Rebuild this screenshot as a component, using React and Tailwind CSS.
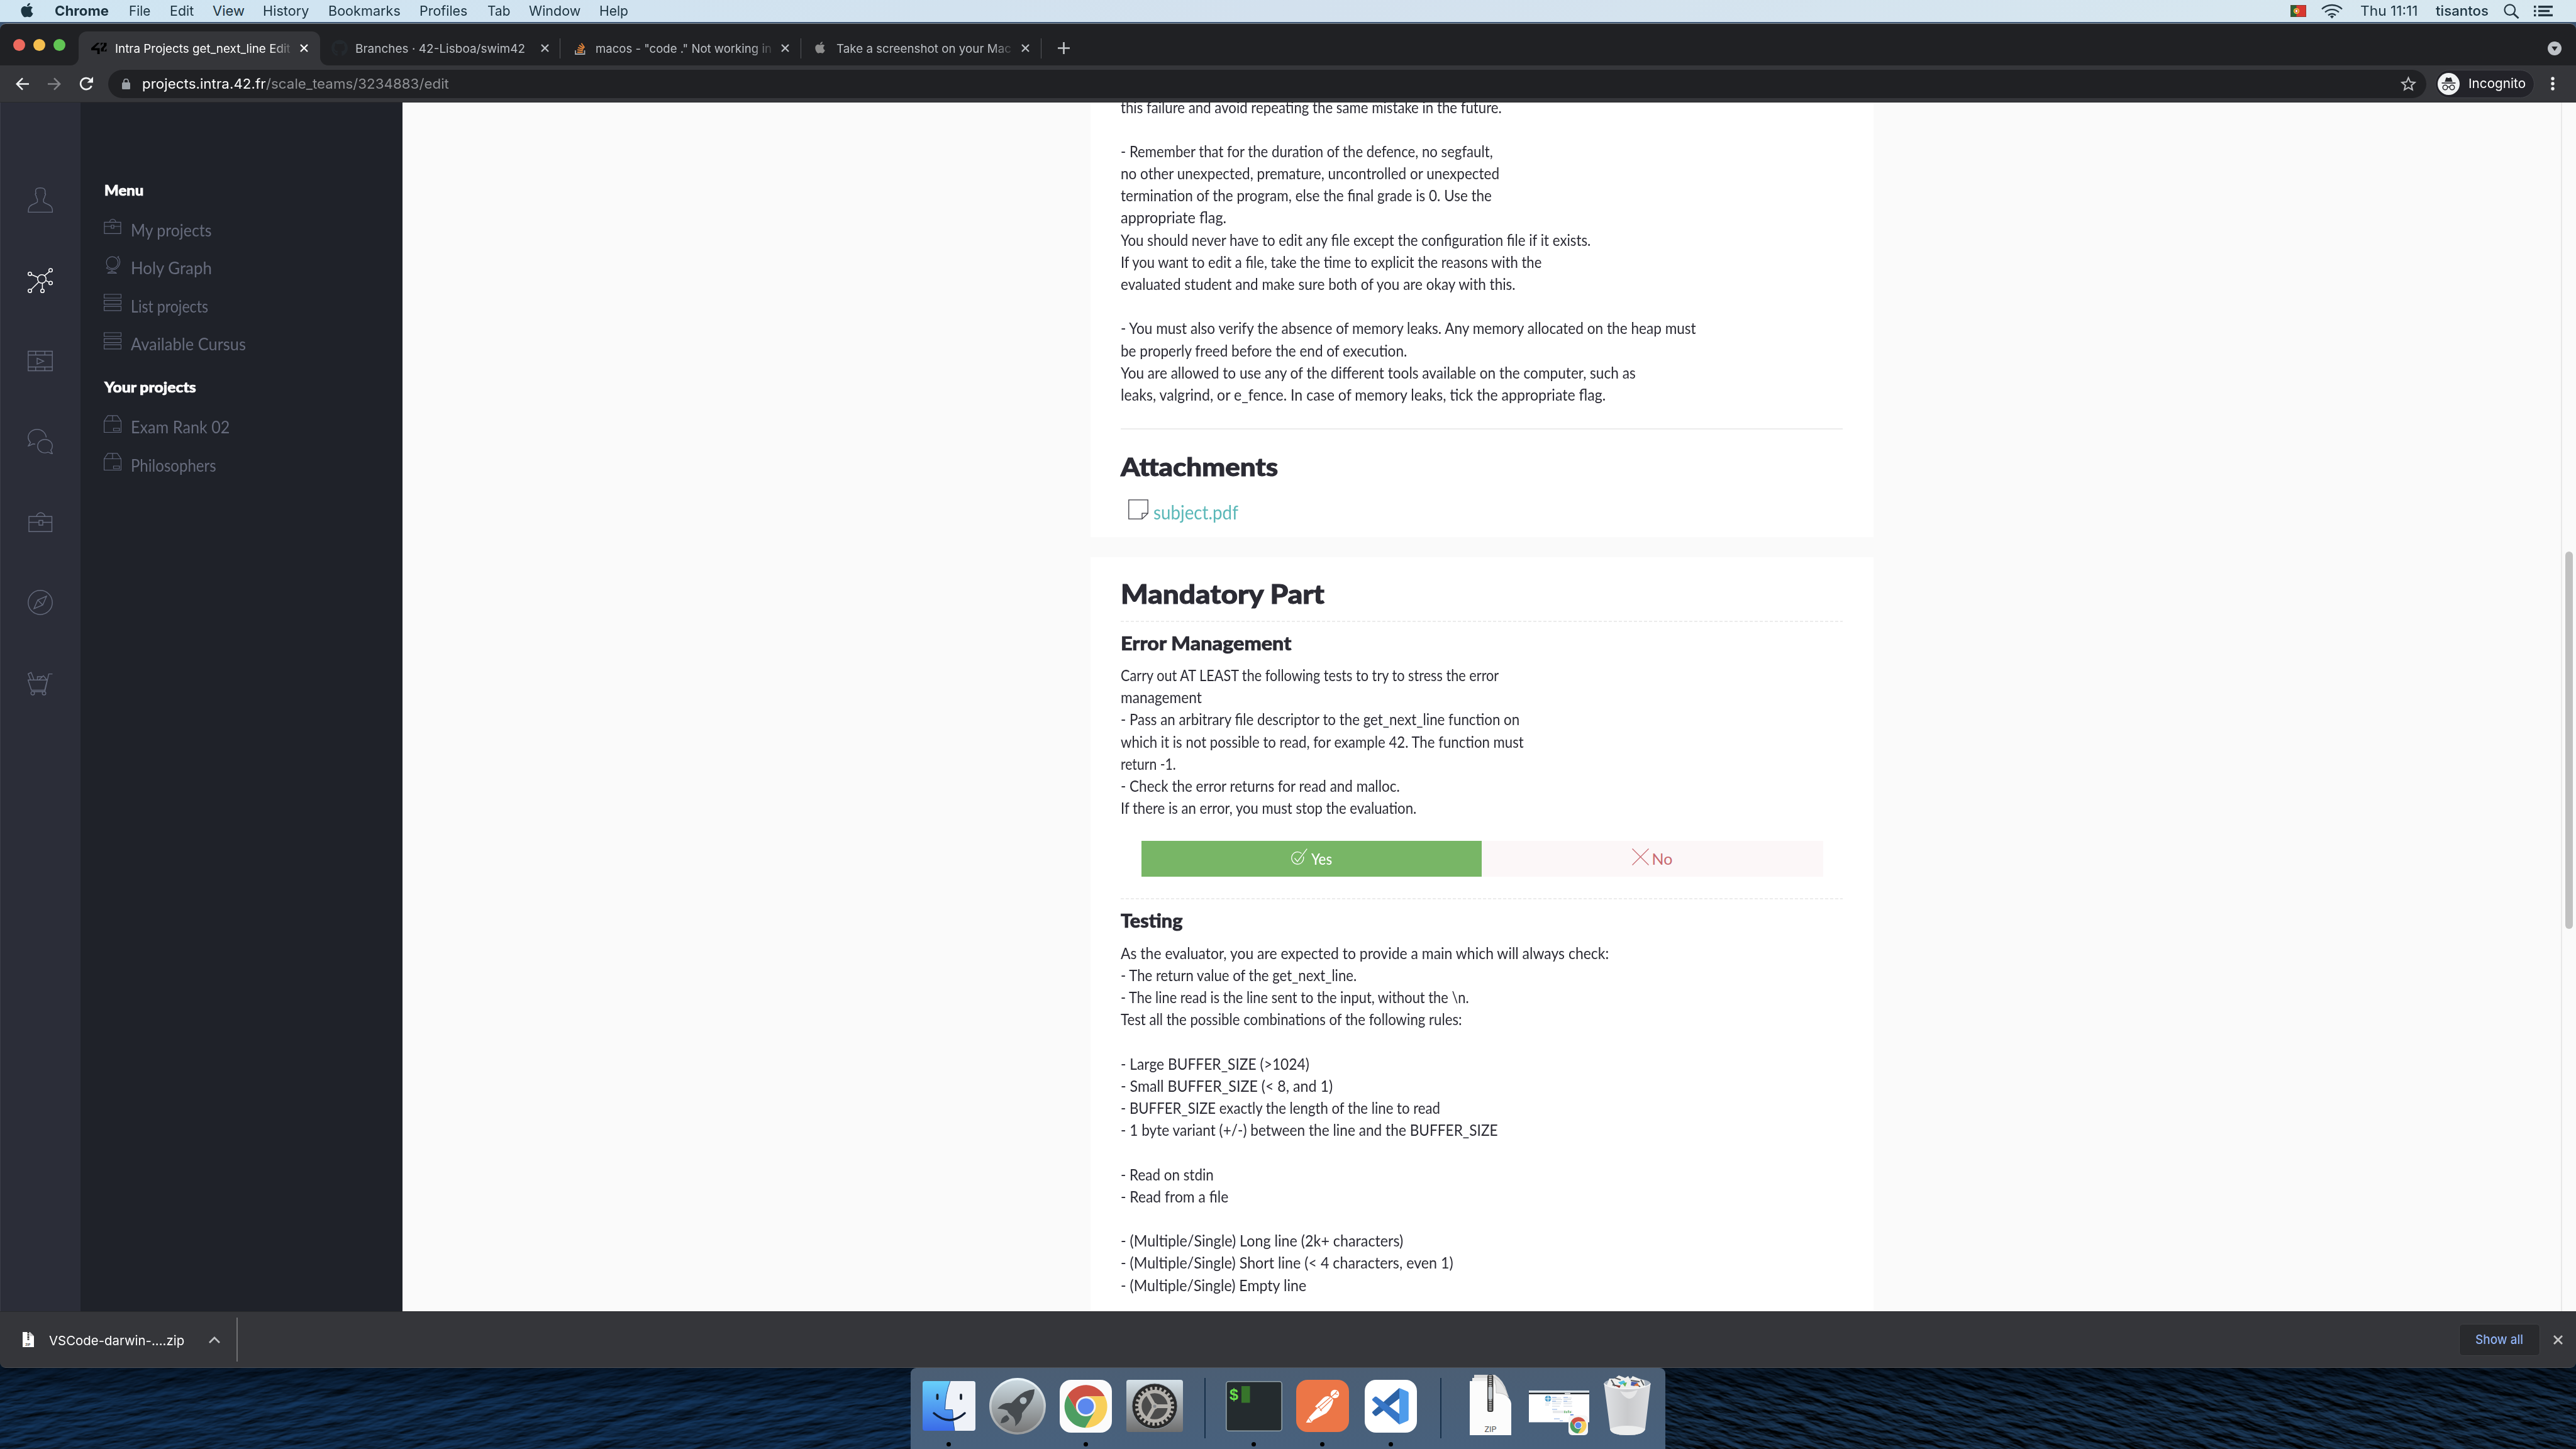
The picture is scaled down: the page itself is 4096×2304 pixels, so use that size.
import React, { useLayoutEffect, useRef, useState } from "react";
import { FaApple, FaGithub } from "react-icons/fa";

/* One line of text, condensed or widened to a set width. */
function Fit({ w, children, className = "" }) {
  const ref = useRef(null);
  const [scale, setScale] = useState(1);
  useLayoutEffect(() => {
    const natural = ref.current.offsetWidth;
    if (natural) setScale(w / natural);
  }, [w, children]);
  return (
    <span className={`inline-block shrink-0 whitespace-pre ${className}`} style={{ width: w }}>
      <span ref={ref} className="inline-block origin-left" style={{ transform: `scaleX(${scale})` }}>
        {children}
      </span>
    </span>
  );
}

/* ---------- menu bar ---------- */

const MENUS = [
  ["File", 34, "mr-[31px]"],
  ["Edit", 38, "mr-[30px]"],
  ["View", 51, "mr-[29px]"],
  ["History", 73, "mr-[31px]"],
  ["Bookmarks", 115, "mr-[30px]"],
  ["Profiles", 76, "mr-[32px]"],
  ["Tab", 36, "mr-[30px]"],
  ["Window", 82, "mr-[30px]"],
  ["Help", 46, ""],
];

function MenuBar() {
  return (
    <header className="flex h-[35px] shrink-0 items-center bg-gradient-to-r from-[#cfe5f2] via-[#d3e1ee] to-[#d7e8f0] text-[22px] leading-[35px] text-[#1c3340]">
      <FaApple className="-mt-1 ml-[32px] h-[26px] w-[22px] text-[#1b3441]" />
      <Fit w={86} className="ml-[33px] mr-[32px] font-bold">Chrome</Fit>
      {MENUS.map(([t, w, m]) => (
        <Fit key={t} w={w} className={m}>{t}</Fit>
      ))}
      <div className="ml-auto flex items-center">
        <svg className="h-[19px] w-[25px]" viewBox="0 0 25 19">
          <rect width="25" height="19" fill="#d8372f" />
          <rect width="9.5" height="19" fill="#2c6136" />
          <circle cx="9.5" cy="9.5" r="4.6" fill="#e3d13b" />
          <circle cx="9.5" cy="9.5" r="2.9" fill="#d8372f" />
          <rect x="8" y="7.7" width="3" height="3.6" fill="#f5f5f5" />
          <rect x=".5" y=".5" width="24" height="18" fill="none" stroke="#5e3a2e" strokeOpacity=".6" />
        </svg>
        <svg className="ml-[24px] h-[24px] w-[34px]" viewBox="0 0 34 24" fill="none" stroke="#243540" strokeWidth="2.3">
          <path d="M1 8.5a23 23 0 0 1 32 0M6 13.5a16 16 0 0 1 22 0M11 18.3a9 9 0 0 1 12 0" />
          <path d="M17 23.5l-3-3.4a4.6 4.6 0 0 1 6 0z" fill="#243540" stroke="none" />
        </svg>
        <Fit w={92} className="ml-[28px]">Thu 11:11</Fit>
        <Fit w={84} className="ml-[28px] font-medium">tisantos</Fit>
        <svg className="ml-[24px] h-[24px] w-[25px]" viewBox="0 0 25 24" fill="none" stroke="#243540" strokeWidth="2.2">
          <circle cx="9.8" cy="9.6" r="8.3" />
          <path d="M15.6 15.6l8 7.4" strokeWidth="2.8" />
        </svg>
        <svg className="ml-[23px] mr-[37px] h-[17px] w-[30px]" viewBox="0 0 30 17" fill="#243540">
          <path d="M0 0h3.4v3.4H0zM0 6.8h3.4v3.4H0zM0 13.6h3.4V17H0zM7 0h23v3.4H7zM7 6.8h18v3.4H7zM7 13.6h23V17H7z" />
        </svg>
      </div>
    </header>
  );
}

/* ---------- tab strip and toolbar ---------- */

function Cross({ className }) {
  return (
    <svg className={`h-[13px] w-[13px] shrink-0 ${className}`} viewBox="0 0 13 13" fill="none" stroke="currentColor" strokeWidth="2.3">
      <path d="M1 1l11 11M12 1L1 12" />
    </svg>
  );
}

function Divider() {
  return <div className="h-[32px] w-px shrink-0 bg-[#55575b]" />;
}

/* A title that fades out at its right end. */
function TabTitle({ children, className }) {
  return <div className={`shrink-0 whitespace-pre [mask-image:linear-gradient(90deg,#000_88%,rgba(0,0,0,.15))] ${className}`}>{children}</div>;
}

function TabStrip() {
  return (
    <div className="flex h-[66px] shrink-0 rounded-t-[9px] bg-[#202124] text-[18.5px] leading-[26px] text-[#bdc1c6]">
      <div className="flex gap-[13px] pl-[20.5px] pt-[23.5px]">
        <i className="h-[19px] w-[19px] rounded-full bg-[#ed6a5e]" />
        <i className="h-[19px] w-[19px] rounded-full bg-[#f5bf4f]" />
        <i className="h-[19px] w-[19px] rounded-full bg-[#61c554]" />
      </div>
      <svg className="ml-[8.5px] mt-[53px] h-[13px] w-[13px]" viewBox="0 0 13 13"><path d="M13 0v13H0A13 13 0 0 0 13 0z" fill="#35363a" /></svg>
      <div className="mt-[11.5px] flex h-[54.5px] w-[384px] items-center rounded-t-[13px] bg-[#35363a] pl-[20px] text-white">
        <svg className="h-[18px] w-[25px] shrink-0" viewBox="0 0 25 18" fill="#000">
          <path d="M9.5 0h4L5 8.6h8.5V18H9.700v-5.900H0V8.600zM15 0h4.500L15 4.600zM24.500 0v4.600L20 9.200v4.600h-4.500V9.200L20 4.600V0zM24.500 9.200v4.600H20z" />
        </svg>
        <TabTitle className="ml-[13px] w-[280px]">
          <Fit w={279}>Intra Projects get_next_line Edit</Fit>
        </TabTitle>
        <Cross className="ml-[14px]" />
      </div>
      <svg className="mt-[53px] h-[13px] w-[13px]" viewBox="0 0 13 13"><path d="M0 0v13h13A13 13 0 0 1 0 0z" fill="#35363a" /></svg>
      <div className="mt-[11.5px] flex h-[54.5px] items-center">
        <FaGithub className="ml-[5px] h-[27px] w-[26px] text-[#24292e]" />
        <Fit w={270} className="ml-[11.500px]">Branches · 42-Lisboa/swim42</Fit>
        <Cross className="ml-[25.500px] mr-[17px]" />
        <Divider />
        <svg className="ml-[23px] h-[20px] w-[17px] shrink-0" viewBox="0 0 17 20" fill="none">
          <path d="M1 13v6h14.500v-6" stroke="#a9adb1" strokeWidth="1.800" />
          <path d="M3.800 16h8.800M4 12.300l8.800 1M5 8.600l8.400 2.600M7 4.900l7.400 4.700M10.400 1.700l5 7" stroke="#e8873a" strokeWidth="1.900" />
        </svg>
        <TabTitle className="ml-[16px] w-[281px]">
          <Fit w={280}>macos - "code ." Not working in</Fit>
        </TabTitle>
        <Cross className="ml-[14px] mr-[18px]" />
        <Divider />
        <FaApple className="-mt-[3px] ml-[21px] h-[21px] w-[18px] text-[#8c8c8c]" />
        <TabTitle className="ml-[17px] w-[280px]">
          <Fit w={278}>Take a screenshot on your Mac</Fit>
        </TabTitle>
        <Cross className="ml-[14px] mr-[18px]" />
        <Divider />
        <svg className="ml-[26px] h-[19px] w-[19px]" viewBox="0 0 19 19" stroke="#c4c7ca" strokeWidth="2.600"><path d="M9.500 0v19M0 9.500h19" /></svg>
      </div>
      <svg className="ml-auto mr-[23px] mt-[28px] h-[22px] w-[22px]" viewBox="0 0 22 22">
        <circle cx="11" cy="11" r="11" fill="#bdc1c6" />
        <path d="M6.200 8h9.600L11 15z" fill="#202124" />
      </svg>
    </div>
  );
}

function Toolbar() {
  return (
    <div className="flex h-[58px] shrink-0 items-center bg-[#35363a] text-[21.5px] leading-[28px] text-white">
      <svg className="ml-[25px] h-[21px] w-[21px]" viewBox="0 0 21 21" fill="none" stroke="#f1f3f4" strokeWidth="2.500"><path d="M21 10.500H2M11 1.300L1.800 10.500 11 19.700" /></svg>
      <svg className="ml-[30px] h-[21px] w-[21px]" viewBox="0 0 21 21" fill="none" stroke="#838488" strokeWidth="2.500"><path d="M0 10.500h19M10 1.300l9.200 9.200L10 19.700" /></svg>
      <svg className="ml-[29px] h-[22px] w-[23px]" viewBox="0 0 23 22" fill="none" stroke="#f1f3f4" strokeWidth="2.700">
        <path d="M19.500 14.500a9 9 0 1 1-2.200-10" />
        <path d="M22 0v9.500h-9.500z" fill="#f1f3f4" stroke="none" />
      </svg>
      <div className="ml-[23px] flex h-[45px] w-[3686px] items-center rounded-full bg-[#202124]">
        <svg className="ml-[22px] h-[17px] w-[13px]" viewBox="0 0 13 17">
          <rect y="6" width="13" height="11" rx="1.500" fill="#9aa0a6" />
          <path d="M3 7V4a3.500 3.500 0 0 1 7 0v3" fill="none" stroke="#9aa0a6" strokeWidth="1.800" />
        </svg>
        <Fit w={197} className="ml-[19px]">projects.intra.42.fr</Fit>
        <Fit w={291} className="text-[#8f9195]">/scale_teams/3234883/edit</Fit>
        <svg className="ml-auto mr-[16px] h-[24px] w-[25px]" viewBox="0 0 25 24" fill="none" stroke="#c1c3c6" strokeWidth="2">
          <path d="M12.500 2.600l2.900 6.700 7.400.700-5.600 4.800 1.700 7-6.400-3.700-6.400 3.700 1.700-7L2.200 10l7.400-.700z" />
        </svg>
      </div>
      <div className="ml-[14px] flex h-[45px] w-[158px] items-center rounded-full border border-[#424349] bg-[#232329] text-[20.500px]">
        <svg className="ml-[3px] h-[35px] w-[35px]" viewBox="0 0 35 35">
          <circle cx="17.500" cy="17.500" r="17.500" fill="#f1f3f4" />
          <path d="M13.500 7.500c1.500-1 2.500.4 4 .4s2.500-1.400 4-.4l2.200 6.500H11.300z" fill="#27282c" />
          <path d="M6.500 16h22" stroke="#27282c" strokeWidth="1.700" />
          <g fill="none" stroke="#27282c" strokeWidth="1.500"><circle cx="12" cy="23" r="3.700" /><circle cx="23" cy="23" r="3.700" /><path d="M15.700 22.500q1.800-1 3.600 0" /></g>
        </svg>
        <Fit w={91} className="ml-[13.500px]">Incognito</Fit>
      </div>
      <svg className="ml-[26px] h-[22px] w-[6px]" viewBox="0 0 6 22" fill="#f1f3f4"><circle cx="3" cy="3" r="2.700" /><circle cx="3" cy="11" r="2.700" /><circle cx="3" cy="19" r="2.700" /></svg>
    </div>
  );
}

/* ---------- page sidebars ---------- */

const RAIL = [
  <path key="a" d="M1 39.500c0-8 2-10 6-12 4-1.700 8-3 8.500-4.500V19c-1-1.500-2-3.500-2.300-6-1.300-1-1.500-3 0-3.500C11 2 15 .800 20 .800S29 2 27.500 9.500c1.500.500 1 2.500 0 3.500-.300 2.500-1.300 4.500-2.300 6v4c.500 1.500 4.500 2.800 8.300 4.500 4 2 6 4 6 12z" />,
  <g key="b" strokeWidth="1.500">
    <circle cx="22.500" cy="17.500" r="6.700" /><circle cx="3.500" cy="9.500" r="2.800" /><circle cx="36.500" cy="3.700" r="2.800" /><circle cx="36.500" cy="24" r="2.800" /><circle cx="3.500" cy="36.500" r="2.800" /><circle cx="23.500" cy="36.500" r="2.800" />
    <path d="M6.200 10.700l10 4.300M34.600 5.800l-7.800 6.500M34 22.600l-5-2.300M5.400 34.500l12.400-12.200M23.400 33.700v-9.500" />
  </g>,
  <path key="c" d="M.8 4.500h38.400v31H.8zM.8 10.500h38.400M.8 29.500h38.400M12.700 4.500v6M27.300 4.500v6M12.700 29.500v6M27.300 29.500v6M15 15.500v9.500l10.500-4.700z" />,
  <g key="d">
    <path d="M29.500 13.500A14.300 14.300 0 0 0 15 .8C7 .8 .8 6.500 .8 13.500c0 3 1.500 5.700 3.700 8L1 27c3-.5 5-2.500 8-3.300l3 .6" />
    <path d="M27.500 16.700a11.700 10.700 0 0 0 0 21.400c2 0 3.500-.7 4.800-1.200 2.200.8 4.500 2.200 7 2.600l-2.500-5.700c1.500-1.800 2.500-4 2.500-6.400a11.700 10.700 0 0 0-11.800-10.700z" />
  </g>,
  <path key="e" d="M2 11.300h36.500v24H2zM2 20.500h16M24 20.500h14.500M18 17.500h6V25h-6zM14 11.300a6.800 6.800 0 0 1 13.500 0" />,
  <g key="f"><circle cx="20" cy="20" r="19.200" /><path d="M30 10l-14 6-6 14 14-6zM16 16l8 8" /></g>,
  <g key="g"><path d="M.6 15.300h30.400L27 31.500H6zM39.500 5.600h-6l-6.300 28.200H9M4.600 15L.8 5.500l4.700-2.200L10 15M15.500 15V10h8M18 15l7-6.500 5.500 6.500" /><circle cx="8" cy="36.200" r="2.800" /><circle cx="26" cy="36.200" r="2.800" /></g>,
];

const BRIEFCASE = <path d="M1 7.300h26v18H1zM1 14h11M16 14h11M12 12h4v5h-4zM9.500 7.300a4.600 4.600 0 0 1 9.500 0" />;
const GLOBE = <g><circle cx="13.500" cy="10.500" r="9.300" /><path d="M22.500 1.500c7 8 1 20.500-9.500 20.500-4 0-6.500-1.200-8.300-3.500M21.500 2.300l2.600-1.700M4 20l2-2.600M13 22v3M6.500 27.300c1.500-3 11.500-3 13.500 0z" /></g>;
const ROWS = <path d="M.6 1h27v6H.6zM.6 10.600h27v6H.6zM.6 20.200h27v6.600H.6z" />;
const BOX = <path d="M.6 9.500h27v18H.6zM.6 9.500L6.500.800h15l6 8.700M14 .800v8.700M15.500 21h9.500v4h-9.500z" />;

function SideItem({ icon, label, w }) {
  return (
    <a className="flex h-[60.600px] items-center text-[26px] leading-[32px] text-[#676c7d]">
      <svg className="mb-2 mr-[15px] h-[28px] w-[28px] shrink-0" viewBox="0 0 28 28" fill="none" stroke="#60667a" strokeWidth="1.200">{icon}</svg>
      <Fit w={w} className="mt-[2.500px]">{label}</Fit>
    </a>
  );
}

function Sidebars() {
  return (
    <>
      <nav className="flex w-[128px] shrink-0 flex-col items-center gap-[88px] border-l border-[#3c3e48] bg-[#2b2d38] pr-[2px] pt-[134.500px]">
        {RAIL.map((icon, i) => (
          <svg key={i} className={`h-[40px] w-[40px] shrink-0 ${i === 1 ? "text-white" : "text-[#656b7d]"}`} viewBox="0 0 40 40" fill="none" stroke="currentColor" strokeWidth="1.400">{icon}</svg>
        ))}
      </nav>
      <nav className="w-[512px] shrink-0 bg-[#1f2229] pl-[37px] pt-[126px] font-[Lato]">
        <h3 className="ml-px h-[28px] text-[22px] font-black leading-[28px] text-white [-webkit-text-stroke:0.7px]"><Fit w={62}>Menu</Fit></h3>
        <div className="mt-[17px]">
          <SideItem icon={BRIEFCASE} label="My projects" w={128} />
          <SideItem icon={GLOBE} label="Holy Graph" w={129} />
          <SideItem icon={ROWS} label="List projects" w={123} />
          <SideItem icon={ROWS} label="Available Cursus" w={183} />
        </div>
        <h3 className="ml-px mt-[25.600px] h-[28px] text-[22px] font-black leading-[28px] text-white [-webkit-text-stroke:0.7px]"><Fit w={146}>Your projects</Fit></h3>
        <div className="mt-[17.500px]">
          <SideItem icon={BOX} label="Exam Rank 02" w={157} />
          <SideItem icon={BOX} label="Philosophers" w={136} />
        </div>
      </nav>
    </>
  );
}

/* ---------- evaluation sheet ---------- */

const INTRO = [
  ["this failure and avoid repeating the same mistake in the future.", 606],
  null,
  ["- Remember that for the duration of the defence, no segfault,", 592],
  ["no other unexpected, premature, uncontrolled or unexpected", 602],
  ["termination of the program, else the final grade is 0. Use the", 590],
  ["appropriate flag.", 168],
  ["You should never have to edit any file except the configuration file if it exists.", 747],
  ["If you want to edit a file, take the time to explicit the reasons with the", 669],
  ["evaluated student and make sure both of you are okay with this.", 628],
  null,
  ["- You must also verify the absence of memory leaks. Any memory allocated on the heap must", 915],
  ["be properly freed before the end of execution.", 455],
  ["You are allowed to use any of the different tools available on the computer, such as", 819],
  ["leaks, valgrind, or e_fence. In case of memory leaks, tick the appropriate flag.", 771],
];

const ERRORS = [
  ["Carry out AT LEAST the following tests to try to stress the error", 601],
  ["management", 129],
  ["- Pass an arbitrary file descriptor to the get_next_line function on", 634],
  ["which it is not possible to read, for example 42. The function must", 641],
  ["return -1.", 88],
  ["- Check the error returns for read and malloc.", 444],
  ["If there is an error, you must stop the evaluation.", 470],
];

const TESTING = [
  ["As the evaluator, you are expected to provide a main which will always check:", 776],
  ["- The return value of the get_next_line.", 375],
  ["- The line read is the line sent to the input, without the \\n.", 554],
  ["Test all the possible combinations of the following rules:", 543],
  null,
  ["- Large BUFFER_SIZE (>1024)", 300],
  ["- Small BUFFER_SIZE (< 8, and 1)", 337],
  ["- BUFFER_SIZE exactly the length of the line to read", 508],
  ["- 1 byte variant (+/-) between the line and the BUFFER_SIZE", 600],
  null,
  ["- Read on stdin", 148],
  ["- Read from a file", 171],
  null,
  ["- (Multiple/Single) Long line (2k+ characters)", 449],
  ["- (Multiple/Single) Short line (< 4 characters, even 1)", 529],
  ["- (Multiple/Single) Empty line", 295],
];

function Lines({ lines, className }) {
  return (
    <div className={`text-[25px] leading-[35.200px] ${className}`}>
      {lines.map((l, i) => (
        <div key={i} className="h-[35.200px]">{l && <Fit w={l[1]}>{l[0]}</Fit>}</div>
      ))}
    </div>
  );
}

function Dashes({ className }) {
  return <div className={`h-[2px] bg-[repeating-linear-gradient(90deg,#ececec_0_5px,transparent_5px_8px)] ${className}`} />;
}

function Sheet() {
  return (
    <main className="relative flex-1 overflow-hidden bg-[#fafafa] pl-[1094px] font-[Lato] text-[#2b2b34]">
      <section className="h-[690.500px] w-[1245px] overflow-hidden bg-white pl-[48px] pr-[49px]">
        <Lines lines={INTRO} className="-mt-[10.500px]" />
        <div className="mt-[35.500px] h-[2px] bg-[#ececec]" />
        <h2 className="mt-[35px] h-[48px] text-[40px] font-black leading-[48px] [-webkit-text-stroke:1px]"><Fit w={250}>Attachments</Fit></h2>
        <a className="ml-[12px] mt-[28.500px] flex h-[36px] text-[30px] leading-[36px] text-[#5ab8b8]">
          <svg className="mr-[8px] h-[32px] w-[32px]" viewBox="0 0 32 32" fill="none" stroke="#3a3a42" strokeWidth="1.300"><path d="M.8.8h30.400v21.400L22 31.200H.8zM31.200 22.200H22v9" /></svg>
          <Fit w={135} className="mt-[2px]">subject.pdf</Fit>
        </a>
      </section>
      <section className="mt-[32px] h-[1300px] w-[1245px] bg-white pl-[48px] pr-[49px] pt-[33px]">
        <h2 className="h-[50px] text-[42px] font-black leading-[50px] [-webkit-text-stroke:1px]"><Fit w={324}>Mandatory Part</Fit></h2>
        <Dashes className="mt-[18px]" />
        <h3 className="mt-[15px] h-[36px] text-[30px] font-black leading-[36px] [-webkit-text-stroke:0.7px]"><Fit w={272}>Error Management</Fit></h3>
        <Lines lines={ERRORS} className="mt-[16.500px]" />
        <div className="ml-[32.500px] mt-[34.500px] flex h-[57.500px] w-[1084px] text-[25px] leading-[57px]">
          <div className="flex w-[541px] items-center justify-center bg-[#78b666] text-white">
            <svg className="mb-[6px] mr-[6px] h-[27px] w-[26px]" viewBox="0 0 26 27" fill="none" stroke="white" strokeWidth="1.300">
              <path d="M16.500 8A9.500 9.700 0 1 0 19.500 13M5.500 15.500l4.500 5.500L25.300.6" />
            </svg>
            <Fit w={33} className="font-medium">Yes</Fit>
          </div>
          <div className="flex flex-1 items-center justify-center bg-[#fcf7f8] text-[#c8686f]">
            <svg className="mb-[6px] mr-[5px] h-[27px] w-[27px]" viewBox="0 0 27 27" fill="none" stroke="#c8686f" strokeWidth="1.200"><path d="M.5.5l26 26M26.500.5l-26 26" /></svg>
            <Fit w={33}>No</Fit>
          </div>
        </div>
        <Dashes className="mt-[34px]" />
        <h3 className="mt-[15px] h-[36px] text-[30px] font-black leading-[36px] [-webkit-text-stroke:0.7px]"><Fit w={99}>Testing</Fit></h3>
        <Lines lines={TESTING} className="mt-[16.500px]" />
      </section>
      <div className="absolute right-0 top-0 h-full w-[24px] border-l-2 border-[#e8e8e8] bg-[#fafafa]">
        <div className="ml-[5px] mt-[714px] h-[600px] w-[12px] rounded-full bg-[#c1c1c1]" />
      </div>
    </main>
  );
}

/* ---------- downloads bar ---------- */

function Downloads() {
  return (
    <div className="relative z-10 flex h-[90px] shrink-0 items-center rounded-b-[9px] border-b border-t border-b-[#4e4f52] border-t-[#28292b] bg-[#35363a] text-[20.500px] leading-[28px] text-white">
      <svg className="ml-[36px] h-[24px] w-[18px]" viewBox="0 0 18 24">
        <path d="M0 0h11.500L18 6.500V24H0z" fill="#fff" /><path d="M11.500 0v6.500H18z" fill="#c9c9c9" />
        <path d="M9 0v13" stroke="#333" strokeWidth="3" strokeDasharray="2 .7" />
        <text x="4.300" y="21.800" fontSize="5" fontWeight="700" fill="#444" fontFamily="Inter">ZIP</text>
      </svg>
      <Fit w={215} className="ml-[24px] mt-[3px]">VSCode-darwin-....zip</Fit>
      <svg className="ml-[39px] h-[11px] w-[18px]" viewBox="0 0 18 11" fill="none" stroke="#bfc1c4" strokeWidth="2.700"><path d="M1 10l8-8 8 8" /></svg>
      <div className="ml-[26px] h-[70px] w-[2px] bg-[#6f7073]" />
      <div className="ml-auto flex h-[51px] w-[129px] items-center justify-center rounded-[6px] border border-[#3f4044] bg-[#292a2d] pr-[2px] font-medium text-[#8fb2f5]"><Fit w={76}>Show all</Fit></div>
      <svg className="ml-[21px] mr-[21px] h-[15px] w-[15px]" viewBox="0 0 15 15" stroke="#c2c2c2" strokeWidth="2.700"><path d="M1 1l13 13M14 1L1 14" /></svg>
    </div>
  );
}

/* ---------- desktop and dock ---------- */

function Ocean() {
  return (
    <svg className="absolute inset-0 h-full w-full" viewBox="0 0 4096 129" preserveAspectRatio="none">
      <defs>
        <filter id="seaL" x="0" y="0" width="100%" height="100%" colorInterpolationFilters="sRGB">
          <feTurbulence type="fractalNoise" baseFrequency="0.014 0.060" numOctaves="4" seed="7" />
          <feColorMatrix type="matrix" values="0 0 0 0 0  0 0 0 0 0  0 0 0 0 0  1.200 0 0 0 0" />
          <feDiffuseLighting surfaceScale="3" lightingColor="#17406f"><feDistantLight azimuth="255" elevation="38" /></feDiffuseLighting>
        </filter>
        <filter id="seaR" x="0" y="0" width="100%" height="100%" colorInterpolationFilters="sRGB">
          <feTurbulence type="fractalNoise" baseFrequency="0.022 0.075" numOctaves="4" seed="21" />
          <feColorMatrix type="matrix" values="0 0 0 0 0  0 0 0 0 0  0 0 0 0 0  1.200 0 0 0 0" />
          <feDiffuseLighting surfaceScale="4" lightingColor="#1f4063"><feDistantLight azimuth="280" elevation="32" /></feDiffuseLighting>
        </filter>
        <linearGradient id="shade" x2="0" y2="1"><stop stopColor="#000812" stopOpacity=".6" /><stop offset=".45" stopColor="#000812" stopOpacity=".08" /></linearGradient>
      </defs>
      <rect width="4096" height="129" fill="#0a2038" />
      <g transform="skewY(-9)"><rect x="-10" y="-10" width="1700" height="420" filter="url(#seaL)" /></g>
      <g transform="translate(2600 0) skewY(13)"><rect y="-360" width="1500" height="500" filter="url(#seaR)" /></g>
      <rect width="4096" height="129" fill="url(#shade)" />
    </svg>
  );
}

function ChromeMark() {
  return (
    <g>
      <path d="M7 13.500A20 20 0 0 1 41.600 14.500H24L15.800 28.750z" fill="#cd5244" />
      <path d="M41.600 14.500A20 20 0 0 1 23.400 44L32.200 28.750 24 14.500z" fill="#f8cf5a" />
      <path d="M23.400 44A20 20 0 0 1 7 13.500L15.800 28.750H32.200z" fill="#4d9e62" />
      <circle cx="24" cy="24" r="9.300" fill="#f4f4f4" /><circle cx="24" cy="24" r="7.500" fill="#5b88ee" />
    </g>
  );
}

const Finder = (
  <svg className="h-[80px] w-[84px]" viewBox="0 0 84 80">
    <defs><linearGradient id="fi" x2="0" y2="1"><stop stopColor="#68d0fa" /><stop offset="1" stopColor="#3a6be8" /></linearGradient></defs>
    <rect width="84" height="79" rx="4" fill="url(#fi)" />
    <path d="M44 0H80a4 4 0 0 1 4 4v71a4 4 0 0 1-4 4H51q-3-17-3-33H36Q36 20 44 0z" fill="#eff2f8" />
    <path d="M44 0Q36 20 35.500 45.500H47.500Q48 64 51 79" fill="none" stroke="#244f8c" strokeWidth="1" />
    <path d="M23.500 22v6M61 22v6" stroke="#18202c" strokeWidth="3.800" strokeLinecap="round" />
    <path d="M18 51q25 22 49 0" fill="none" stroke="#101e38" strokeWidth="3.400" strokeLinecap="round" />
  </svg>
);

const Launchpad = (
  <svg className="h-[90px] w-[90px]" viewBox="0 0 90 90">
    <defs><linearGradient id="lp" x2="0" y2="1"><stop stopColor="#ccdae1" /><stop offset="1" stopColor="#777" /></linearGradient><linearGradient id="lr" x2="0" y2="1"><stop stopColor="#eef8fd" /><stop offset="1" stopColor="#97999a" /></linearGradient></defs>
    <circle cx="45" cy="45" r="45" fill="url(#lr)" /><circle cx="45" cy="45" r="41.500" fill="url(#lp)" />
    <path d="M72 18Q56 19 44 31 39 36 35 40 22 38 13 49q10 0 16 3 0 3 5 7l4 3q5 7 3 15 12-9 11-21 3-4 7-9 13-14 13-29z" fill="#464b4f" />
    <path d="M28 59q3 3 4 6-4 7-14 7 1-10 10-13z" fill="#464b4f" />
    <circle cx="54" cy="36" r="5.500" fill="#b2bdc3" />
  </svg>
);

const ChromeIcon = (
  <svg className="h-[84px] w-[83px]" viewBox="0 0 83 84">
    <rect width="83" height="84" rx="18" fill="#fbfbfb" />
    <g transform="translate(.8 1.500) scale(1.700)"><ChromeMark /></g>
  </svg>
);

const Settings = (
  <svg className="h-[84px] w-[90px]" viewBox="0 0 90 84">
    <defs><linearGradient id="se" x2="0" y2="1"><stop stopColor="#d5e1e8" /><stop offset="1" stopColor="#6e6e6e" /></linearGradient></defs>
    <rect width="90" height="83" rx="4" fill="url(#se)" />
    <circle cx="45" cy="42" r="36" fill="#2a2a2a" /><circle cx="45" cy="42" r="36" fill="none" stroke="#8f9aa5" strokeWidth="1" />
    <circle cx="45" cy="42" r="28.500" fill="none" stroke="#b4b1ac" strokeWidth="5" strokeDasharray="3.600 3.860" />
    <circle cx="45" cy="42" r="23.500" fill="#4b4b4b" stroke="#b4b1ac" strokeWidth="5.500" />
    <path d="M45 42h23M45 42L33.500 22M45 42L33.500 62" stroke="#b4b1ac" strokeWidth="6" />
    <circle cx="45" cy="42" r="5" fill="#b4b1ac" /><circle cx="45" cy="42" r="2.600" fill="#85898e" />
  </svg>
);

const Terminal = (
  <svg className="h-[80px] w-[90px]" viewBox="0 0 90 80">
    <rect x=".8" y=".8" width="88.400" height="78.400" rx="4" fill="#242b2e" stroke="#93a3aa" strokeWidth="1.600" />
    <text x="5.500" y="30" fontSize="25" fontFamily="Liberation Mono" fontWeight="700" fill="#6be24c">$</text>
    <rect x="25" y="8" width="13.500" height="26.500" fill="#37752b" />
  </svg>
);

const Postman = (
  <svg className="h-[84px] w-[84px]" viewBox="0 0 84 84">
    <rect width="84" height="83" rx="18" fill="#ec7647" />
    <circle cx="61.500" cy="22.500" r="6.800" fill="#fff" />
    <path d="M56 27l5.500-5 5 1.500M61.500 22l3.500-4" stroke="#ec7647" strokeWidth="1.200" fill="none" />
    <path d="M50 26q6 1 9 6-2 12-11 21L27 64l-3 4H15.500l5.500-9L34 45l-4-2.500L43 29q3-3 7-3z" fill="#fff" />
    <path d="M54 28L34 45M57 31L38 49M35 42l6 8M20 61l4 6" stroke="#ec7647" strokeWidth="1.100" />
  </svg>
);

const VSCode = (
  <svg className="h-[84px] w-[83px]" viewBox="0 0 83 84">
    <rect width="83" height="84" rx="18" fill="#fff" />
    <path d="M55 13L12.500 50.500a2 2 0 0 0 0 2.800L16 57a2.500 2.500 0 0 0 3 0L56 29z" fill="#2c62a5" />
    <path d="M55 71L12.500 33a2 2 0 0 1 0-2.800L16 27a2.500 2.500 0 0 1 3 0L56 55z" fill="#3877c8" />
    <path d="M55 13l13 5.500a3 3 0 0 1 1.800 2.700v41.600a3 3 0 0 1-1.800 2.700L55 71z" fill="#4f9ceb" />
  </svg>
);

const Zip = (
  <svg className="h-[96px] w-[66px]" viewBox="0 0 66 96">
    <path d="M7 0h33q14 9 19 27v60H7z" fill="#d9d9d9" /><path d="M4 5h34q16 10 22 25v60H4z" fill="#ececec" />
    <path d="M0 10h33q9 2 11 19 20 3 22 17v50H0z" fill="#fcfcfc" />
    <path d="M39 4q16 10 23 32-9-8-20-7 1-12-3-25z" fill="#e4e4e4" stroke="#b9b9b9" strokeWidth=".8" />
    <rect x="28" y="0" width="9.500" height="59" rx="3" fill="#3a3a3a" />
    <path d="M32.700 1v56" stroke="#dcdcdc" strokeWidth="4.500" strokeDasharray="1.500 1.500" />
    <rect x="29.500" y="18" width="6.500" height="22" rx="3" fill="#c5ccd1" stroke="#666" strokeWidth=".6" />
    <text x="23.500" y="91" fontSize="13" fontFamily="Roboto" fill="#555" textLength="19" lengthAdjust="spacingAndGlyphs">ZIP</text>
  </svg>
);

const Minimized = (
  <svg className="h-[96px] w-[96px]" viewBox="0 0 96 96">
    <rect y="25" width="96" height="50.500" fill="#fff" /><rect y="25" width="96" height="3.500" fill="#dce4ea" /><rect y="28.500" width="96" height="2.500" fill="#24292e" />
    <rect x="57" y="29" width="9" height="1.400" fill="#fff" />
    <circle cx="30.500" cy="38" r="5" fill="#4a9cc9" /><path d="M25.500 38h10M30.500 33v10" stroke="#fff" strokeWidth="1" />
    <path d="M37 37h14M37 39.500h16M55 37h13M55 39.500h12M37 43h15M55 43h14M37 46h14M55 46h13M37 50h12M55 50h14M26 45h8M26 48h6" stroke="#b8c3cf" strokeWidth=".7" />
    <path d="M37 36h7M55 36h7M37 42h6M55 42h6M37 55h8M40 70h9M49 73h5" stroke="#6d9be0" strokeWidth=".8" />
    <rect x="38" y="57" width="31" height="4" fill="#e7e9eb" /><path d="M57 57v4M60 58v3M63 56.500v4M66 58v3" stroke="#5db464" strokeWidth="1.300" /><rect x="66" y="63" width="5" height="1.500" fill="#3768d4" />
    <g transform="translate(63 64.500)"><rect width="31" height="31.500" rx="6" fill="#f6f6f6" /><g transform="translate(-.1 .2) scale(.650)"><ChromeMark /></g></g>
  </svg>
);

const Trash = (
  <svg className="h-[96px] w-[75px]" viewBox="0 0 75 96">
    <defs><linearGradient id="tr"><stop stopColor="#dfe1e4" /><stop offset=".5" stopColor="#c9cacc" /><stop offset="1" stopColor="#dcdde0" /></linearGradient></defs>
    <ellipse cx="37.500" cy="14" rx="37" ry="9" fill="#a5afbb" />
    <path d="M5 16L9 6l8 0L24 1l10 4 5-3 3 6 4-6 12 5 6 2 3 13-15 4H18z" fill="#eeeeec" />
    <path d="M12 8l6 10M18 5l9 3M43 9l14 2M59 8l5 9M14 16l10 2M50 14l8 5" stroke="#55585c" strokeWidth="2" />
    <path d="M23 12l9-3 3 4-8 3z" fill="#4dc0df" /><path d="M30 14l7-2-3 7z" fill="#62b255" /><path d="M44 11l10 1-5 6-6-1z" fill="#4a5ea9" /><path d="M47 17l7-4 2 5z" fill="#dd7032" /><path d="M18 17l9 0-2 4z" fill="#8d3a34" />
    <path d="M.5 14C8 25 67 25 74.500 14L66 86q-2 10-28.500 10T10 86z" fill="url(#tr)" />
    <path d="M26 26q12 4 28-2-5 14-14 14-8-2-14-12z" fill="#f1f1f1" opacity=".7" />
    <path d="M10 86q10-5 27-5t29 5q-2 10-28.500 10T10 86z" fill="#eceded" />
    <path d="M.5 14C8 25 67 25 74.500 14" fill="none" stroke="#f5f6f7" strokeWidth="1.500" />
  </svg>
);

function DockItem({ children, running, className = "" }) {
  return (
    <div className={`relative flex h-[122px] w-[109px] shrink-0 items-center justify-center ${className}`}>
      {children}
      {running && <i className="absolute bottom-[-3px] left-[51px] h-[7px] w-[7px] rounded-full bg-black" />}
    </div>
  );
}

function Dock() {
  return (
    <div className="relative flex h-[129px] w-[1200px] rounded-t-[9px] bg-gradient-to-b from-[#4b5e74] to-[#48617d] pl-[6px]">
      <DockItem running>{Finder}</DockItem>
      <DockItem>{Launchpad}</DockItem>
      <DockItem running>{ChromeIcon}</DockItem>
      <DockItem>{Settings}</DockItem>
      <div className="ml-[25px] mr-[22px] mt-[16px] h-[96px] w-[2px] bg-[#17304a]" />
      <DockItem running>{Terminal}</DockItem>
      <DockItem running>{Postman}</DockItem>
      <DockItem running>{VSCode}</DockItem>
      <div className="ml-[24px] mr-[23px] mt-[16px] h-[96px] w-[2px] bg-[#17304a]" />
      <DockItem className="-mt-[2px]">{Zip}</DockItem>
      <DockItem className="-mt-[2px]">{Minimized}</DockItem>
      <DockItem className="-mt-[2px]">{Trash}</DockItem>
    </div>
  );
}

export default function App() {
  return (
    <div className="flex h-[2304px] w-[4096px] flex-col overflow-hidden bg-[#0a2038] font-[Inter]">
      <MenuBar />
      <div className="flex h-[2140px] shrink-0 flex-col border-t-2 border-[#3d5573] bg-[#3d5573]">
        <div className="shrink-0 rounded-t-[10px] bg-[#84898c] pt-px"><TabStrip /></div>
        <Toolbar />
        <div className="h-px shrink-0 bg-[#28292b]" />
        <div className="flex min-h-0 flex-1"><Sidebars /><Sheet /></div>
        <div className="bg-[#061627]"><Downloads /></div>
      </div>
      <div className="relative flex h-[129px] shrink-0 pl-[1448px]">
        <Ocean />
        <Dock />
      </div>
    </div>
  );
}
